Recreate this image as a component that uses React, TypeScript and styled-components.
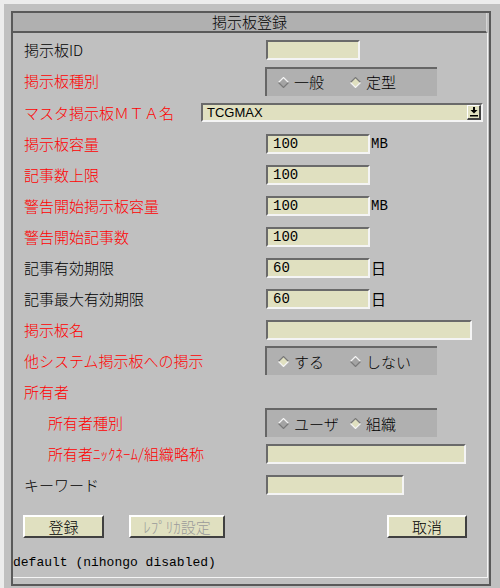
import React from "react";
import styled, { createGlobalStyle } from "styled-components";

const colors = {
  face: "#c0c0c0",
  trough: "#b0b0b0",
  field: "#e0e0c0",
  dark: "#5a5a5a",
  light: "#f4f4f4",
  red: "#ff0000",
};

const jp = `"Noto Sans CJK JP", "Liberation Sans", sans-serif`;
const mono = `"Liberation Mono", "Noto Sans CJK JP", monospace`;

const GlobalStyle = createGlobalStyle`
  html, body {
    margin: 0;
    background: ${colors.face};
  }
  * {
    box-sizing: border-box;
  }
`;

type RowData = {
  label: string;
  red?: boolean;
  indent?: boolean;
  kind: "input" | "radio" | "select" | "none";
  width?: number;
  value?: string;
  unit?: string;
  options?: string[];
  selected?: number;
  height?: number;
};

const rows: RowData[] = [
  { label: "掲示板ID", kind: "input", width: 94 },
  { label: "掲示板種別", red: true, kind: "radio", options: ["一般", "定型"], selected: 1, height: 32 },
  { label: "マスタ掲示板ＭＴＡ名", red: true, kind: "select", value: "TCGMAX" },
  { label: "掲示板容量", red: true, kind: "input", width: 104, value: "100", unit: "MB" },
  { label: "記事数上限", red: true, kind: "input", width: 104, value: "100" },
  { label: "警告開始掲示板容量", red: true, kind: "input", width: 104, value: "100", unit: "MB" },
  { label: "警告開始記事数", red: true, kind: "input", width: 104, value: "100" },
  { label: "記事有効期限", kind: "input", width: 104, value: "60", unit: "日" },
  { label: "記事最大有効期限", kind: "input", width: 104, value: "60", unit: "日" },
  { label: "掲示板名", red: true, kind: "input", width: 206 },
  { label: "他システム掲示板への掲示", red: true, kind: "radio", options: ["する", "しない"], selected: 0 },
  { label: "所有者", red: true, kind: "none" },
  { label: "所有者種別", red: true, indent: true, kind: "radio", options: ["ユーザ", "組織"], selected: 1 },
  { label: "所有者ﾆｯｸﾈｰﾑ/組織略称", red: true, indent: true, kind: "input", width: 200 },
  { label: "キーワード", kind: "input", width: 138 },
];

function Diamond({ on }: { on: boolean }) {
  return (
    <svg width="11" height="11" viewBox="0 0 11 11">
      <polygon points="5.5,0.5 10.5,5.5 5.5,10.5 0.5,5.5" fill={on ? colors.field : "#a4a4a4"} />
      <polyline points="0.5,5.5 5.5,0.5 10.5,5.5" fill="none" stroke={on ? "#7a7a7a" : "#f4f4f4"} strokeWidth="1.2" />
      <polyline points="0.5,5.5 5.5,10.5 10.5,5.5" fill="none" stroke={on ? "#f4f4f4" : "#7a7a7a"} strokeWidth="1.2" />
    </svg>
  );
}

function DropArrow() {
  return (
    <svg width="8" height="10" viewBox="0 0 8 10">
      <rect x="3" y="0" width="2" height="3" fill="#000" />
      <polygon points="0.5,3 7.5,3 4,6.5" fill="#000" />
      <rect x="0" y="8" width="8" height="1.5" fill="#000" />
    </svg>
  );
}

function App() {
  return (
    <Screen>
      <GlobalStyle />
      <Panel>
        <TitleBar>掲示板登録</TitleBar>
        <Content>
          <Form>
            {rows.map((r) => (
              <Row key={r.label} $h={r.height}>
                <Label $red={r.red} $indent={r.indent} $narrow={r.kind === "select"}>
                  {r.label}
                </Label>
                {r.kind === "input" && (
                  <>
                    <TextField $w={r.width || 100}>{r.value}</TextField>
                    {r.unit && <Unit $jp={r.unit === "日"}>{r.unit}</Unit>}
                  </>
                )}
                {r.kind === "radio" && (
                  <RadioBox>
                    {r.options!.map((o, i) => (
                      <RadioOption key={o}>
                        <Diamond on={i === r.selected} />
                        {o}
                      </RadioOption>
                    ))}
                  </RadioBox>
                )}
                {r.kind === "select" && (
                  <Select>
                    <span>{r.value}</span>
                    <ArrowButton>
                      <DropArrow />
                    </ArrowButton>
                  </Select>
                )}
              </Row>
            ))}
          </Form>
          <ButtonRow>
            <Button $w={81}>登録</Button>
            <Button $w={96} disabled>
              ﾚﾌﾟﾘｶ設定
            </Button>
            <Button $w={80} $right>
              取消
            </Button>
          </ButtonRow>
          <Status>default (nihongo disabled)</Status>
        </Content>
      </Panel>
    </Screen>
  );
}

const Screen = styled.div`
  width: 500px;
  height: 588px;
  background: ${colors.face};
  border-top: 4px solid #ececec;
  border-left: 4px solid #ececec;
  padding: 7px 9px 0 7px;
`;

const Panel = styled.div`
  width: 480px;
  height: 575px;
  border: 2px solid ${colors.dark};
  display: flex;
  flex-direction: column;
`;

const TitleBar = styled.div`
  height: 20px;
  background: ${colors.trough};
  border-bottom: 2px solid ${colors.dark};
  border-right: 1px solid #d4d4d4;
  margin-right: 2px;
  font-family: ${jp};
  font-size: 15px;
  font-weight: 300;
  line-height: 18px;
  text-align: center;
  color: #000;
`;

const Content = styled.div`
  height: 545px;
  margin-right: 1px;
  border-right: 1px solid ${colors.light};
  border-bottom: 1px solid ${colors.light};
  padding-top: 1px;
  display: flex;
  flex-direction: column;
`;

const Form = styled.div`
  display: flex;
  flex-direction: column;
  padding-left: 11px;
`;

const Row = styled.div<{ $h?: number }>`
  display: flex;
  align-items: center;
  height: ${(p) => p.$h || 31}px;
`;

const Label = styled.span<{ $red?: boolean; $indent?: boolean; $narrow?: boolean }>`
  width: ${(p) => (p.$narrow ? 177 : 242)}px;
  flex: none;
  padding-left: ${(p) => (p.$indent ? 24 : 0)}px;
  font-family: ${jp};
  font-size: 15px;
  font-weight: 300;
  line-height: 18px;
  color: ${(p) => (p.$red ? colors.red : "#000")};
  white-space: nowrap;
`;

const TextField = styled.div<{ $w: number }>`
  width: ${(p) => p.$w}px;
  height: 20px;
  background: ${colors.field};
  border-style: solid;
  border-width: 2px;
  border-color: #6a6a6a ${colors.light} ${colors.light} #6a6a6a;
  padding-left: 5px;
  font-family: ${mono};
  font-size: 14px;
  line-height: 16px;
  color: #000;
`;

const Unit = styled.span<{ $jp?: boolean }>`
  margin-left: 1px;
  font-family: ${(p) => (p.$jp ? jp : mono)};
  font-size: ${(p) => (p.$jp ? 15 : 14)}px;
  line-height: 16px;
  color: #000;
`;

const RadioBox = styled.div`
  width: 172px;
  height: 29px;
  margin-left: -1px;
  background: ${colors.trough};
  border-top: 2px solid #666;
  border-left: 2px solid #666;
  padding-left: 11px;
  display: flex;
  align-items: center;
`;

const RadioOption = styled.span`
  width: 72px;
  display: flex;
  align-items: center;
  gap: 5px;
  font-family: ${jp};
  font-size: 15px;
  font-weight: 300;
  line-height: 18px;
  color: #000;
`;

const Select = styled.div`
  width: 282px;
  height: 19px;
  background: ${colors.field};
  border-style: solid;
  border-width: 2px;
  border-color: #6a6a6a ${colors.light} ${colors.light} #6a6a6a;
  padding-left: 4px;
  display: flex;
  align-items: center;
  justify-content: space-between;
  font-family: "Liberation Sans", sans-serif;
  font-size: 13px;
  color: #000;
`;

const ArrowButton = styled.span`
  width: 14px;
  height: 15px;
  background: ${colors.field};
  border-style: solid;
  border-width: 1px 2px 2px 1px;
  border-color: #fff #404040 #404040 #fff;
  display: flex;
  align-items: center;
  justify-content: center;
`;

const ButtonRow = styled.div`
  display: flex;
  align-items: center;
  gap: 25px;
  margin-top: 15px;
  padding: 0 20px 0 10px;
`;

const Button = styled.button<{ $w: number; $right?: boolean }>`
  width: ${(p) => p.$w}px;
  height: 23px;
  margin-left: ${(p) => (p.$right ? "auto" : "0")};
  padding: 0;
  background: ${colors.field};
  border-style: solid;
  border-width: 2px;
  border-color: #fff #404040 #404040 #fff;
  font-family: ${jp};
  font-size: 15px;
  font-weight: 300;
  line-height: 18px;
  color: #000;
  &:disabled {
    color: #9a9a9a;
  }
`;

const Status = styled.div`
  margin-top: 17px;
  font-family: ${mono};
  font-size: 13px;
  line-height: 16px;
  color: #000;
`;

export default App;
